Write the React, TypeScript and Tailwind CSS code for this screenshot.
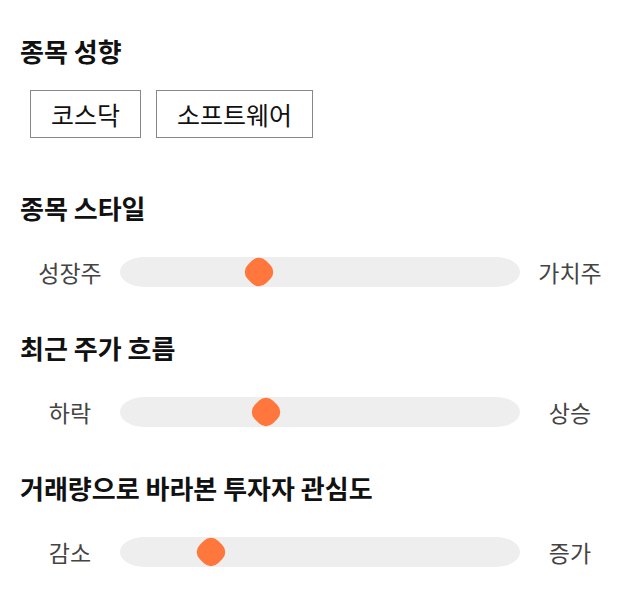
const font = { fontFamily: '"Noto Sans CJK KR", "Noto Sans", sans-serif' };

const sliders = [
  { title: '종목 스타일', left: '성장주', right: '가치주', value: 0.348 },
  { title: '최근 주가 흐름', left: '하락', right: '상승', value: 0.366 },
  { title: '거래량으로 바라본 투자자 관심도', left: '감소', right: '증가', value: 0.227 },
];

function Heading({ children, className = '' }: { children: string; className?: string }) {
  return (
    <h2 className={`px-[20px] text-[26px] leading-[36px] font-bold text-[#111] ${className}`}>{children}</h2>
  );
}

function SliderRow({ left, right, value }: { left: string; right: string; value: number }) {
  return (
    <div className="mt-[31px] flex items-center px-5">
      <span className="w-[100px] text-center text-[23px] leading-[30px] text-[#444]">{left}</span>
      <div className="relative h-[30px] flex-1 rounded-[24px/15px] bg-[#eeeeee]">
        <div
          className="absolute top-1/2 h-[26px] w-[26px] -translate-x-1/2 -translate-y-1/2 rotate-45 rounded-[10px] bg-[#ff773c]"
          style={{ left: `${value * 100}%` }}
        />
      </div>
      <span className="w-[100px] text-center text-[23px] leading-[30px] text-[#444]">{right}</span>
    </div>
  );
}

export default function App() {
  return (
    <div className="min-h-[606px] w-[640px] bg-white pt-[33px]" style={font}>
      <Heading>종목 성향</Heading>
      <div className="mt-[21px] flex gap-[15px] px-[30px]">
        {['코스닥', '소프트웨어'].map(t => (
          <button
            key={t}
            className="h-[48px] border border-[#888] px-[20px] text-[25px] leading-[46px] text-[#111]"
          >
            {t}
          </button>
        ))}
      </div>
      {sliders.map((s, i) => (
        <div key={s.title}>
          <Heading className={i === 0 ? 'mt-[52px]' : 'mt-[43px]'}>{s.title}</Heading>
          <SliderRow left={s.left} right={s.right} value={s.value} />
        </div>
      ))}
    </div>
  );
}
